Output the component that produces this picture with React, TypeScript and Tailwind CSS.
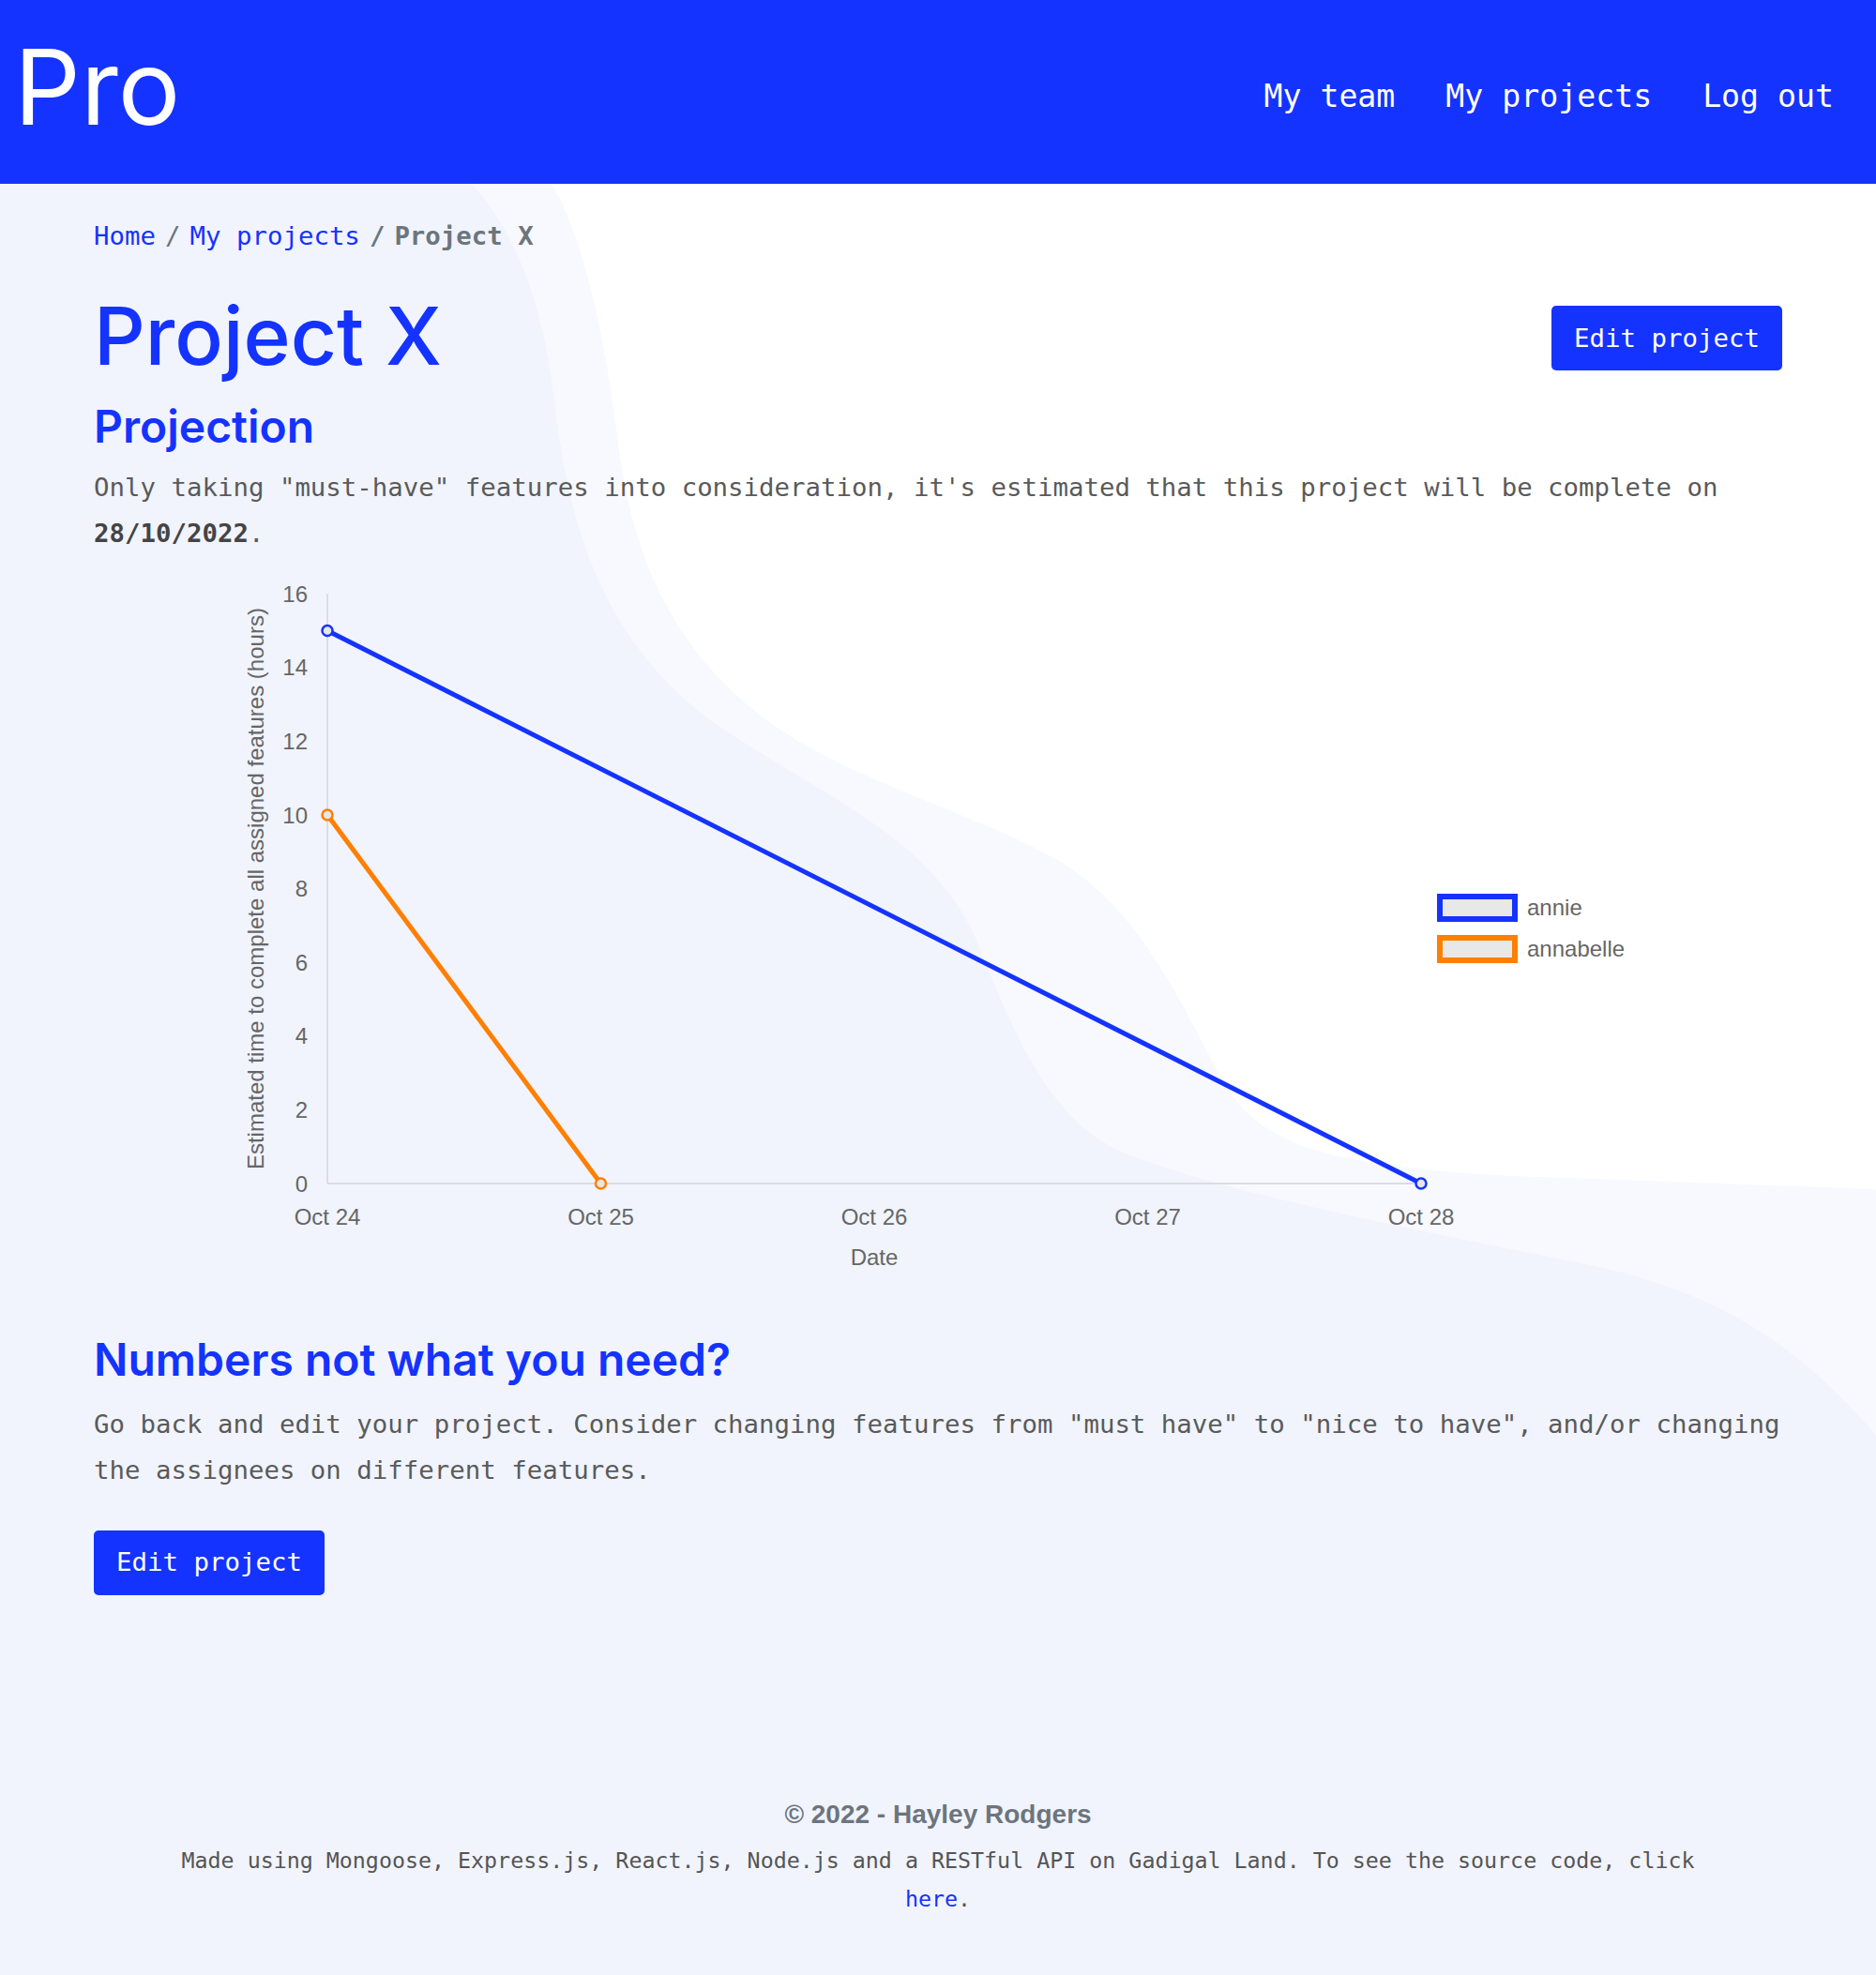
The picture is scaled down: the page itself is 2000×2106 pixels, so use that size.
import React from "react";

const BLUE = "#1433ff";
const ORANGE = "#ff7f00";

// chart geometry, in page pixels
const X0 = 349;
const Y0 = 1261;
const DX = 291.5;
const DY = 39.3;
const xOf = (i: number) => X0 + i * DX;
const yOf = (v: number) => Y0 - v * DY;

const DAYS = ["Oct 24", "Oct 25", "Oct 26", "Oct 27", "Oct 28"];
const SERIES = [
  { name: "annie", color: BLUE, points: [[0, 15], [4, 0]] },
  { name: "annabelle", color: ORANGE, points: [[0, 10], [1, 0]] },
];

function Backdrop() {
  return (
    <svg
      className="pointer-events-none absolute left-0 top-[196px]"
      width={2000}
      height={1910}
      viewBox="0 196 2000 1910"
    >
      <path
        d="M588,196 C615,240 642,330 660,480 C676,600 722,705 835,780 C930,842 1080,880 1150,932 C1228,990 1268,1090 1308,1160 C1348,1222 1420,1244 1612,1254 L2000,1268 V2106 H0 V196 Z"
        fill="#f8f9fe"
      />
      <path
        d="M503,196 C540,238 575,300 590,420 C606,560 640,680 760,770 C880,852 990,890 1040,1000 C1080,1100 1118,1196 1200,1230 C1300,1270 1500,1310 1700,1350 C1850,1382 1930,1450 2000,1530 V2106 H0 V196 Z"
        fill="#f1f4fd"
      />
    </svg>
  );
}

function Header() {
  return (
    <header className="relative z-10 flex h-[196px] items-start justify-between bg-[#1433ff] pl-[15px] pr-[45px]">
      <div className="pt-[37px] font-['Inter',sans-serif] text-[111px] font-normal leading-none text-white">
        Pro
      </div>
      <nav className="mt-[83px] flex gap-[54px] font-['DejaVu_Sans_Mono',monospace] text-[33.2px] leading-[40px] text-white">
        <a href="#">My team</a>
        <a href="#">My projects</a>
        <a href="#">Log out</a>
      </nav>
    </header>
  );
}

function EditButton() {
  return (
    <button
      type="button"
      className="h-[69px] rounded-[5px] bg-[#1433ff] px-[24px] font-['DejaVu_Sans_Mono',monospace] text-[27.4px] leading-none text-white"
    >
      Edit project
    </button>
  );
}

function Chart() {
  return (
    <svg width={1800} height={770} viewBox="100 600 1800 770" className="block font-['Liberation_Sans',Arial,sans-serif]">
      {/* axes */}
      <line x1={X0} y1={yOf(16)} x2={X0} y2={Y0} stroke="#dcdde3" strokeWidth={2} />
      <line x1={X0} y1={Y0} x2={xOf(4)} y2={Y0} stroke="#dcdde3" strokeWidth={2} />

      {/* y ticks */}
      {[0, 2, 4, 6, 8, 10, 12, 14, 16].map((v) => (
        <text key={v} x={328} y={yOf(v) + 8.5} textAnchor="end" fontSize={24} fill="#666">
          {v}
        </text>
      ))}
      <text
        transform={`translate(281 ${(yOf(16) + Y0) / 2}) rotate(-90)`}
        textAnchor="middle"
        fontSize={24}
        fill="#666"
      >
        Estimated time to complete all assigned features (hours)
      </text>

      {/* x ticks */}
      {DAYS.map((d, i) => (
        <text key={d} x={xOf(i)} y={1305} textAnchor="middle" fontSize={24} fill="#666">
          {d}
        </text>
      ))}
      <text x={(xOf(0) + xOf(4)) / 2} y={1348} textAnchor="middle" fontSize={24} fill="#666">
        Date
      </text>

      {/* lines */}
      {SERIES.map((s) => (
        <g key={s.name}>
          <polyline
            points={s.points.map(([i, v]) => `${xOf(i)},${yOf(v)}`).join(" ")}
            fill="none"
            stroke={s.color}
            strokeWidth={5}
            strokeLinecap="round"
          />
          {s.points.map(([i, v]) => (
            <circle key={i} cx={xOf(i)} cy={yOf(v)} r={5.5} fill="#e6e6e6" stroke={s.color} strokeWidth={2.5} />
          ))}
        </g>
      ))}

      {/* legend */}
      {SERIES.map((s, k) => (
        <g key={s.name}>
          <rect x={1535} y={955 + k * 44} width={80} height={24} fill="#e8e8e8" stroke={s.color} strokeWidth={6} />
          <text x={1628} y={975 + k * 44} fontSize={24} fill="#666">
            {s.name}
          </text>
        </g>
      ))}
    </svg>
  );
}

export default function App() {
  return (
    <div className="relative min-h-[2106px] w-full overflow-hidden bg-white">
      <Backdrop />
      <Header />

      <main className="relative z-10 px-[100px]">
        <nav className="pt-[38px] font-['DejaVu_Sans_Mono',monospace] text-[27.4px] leading-[36px]">
          <a href="#" className="text-[#1433ff]">Home</a>
          <span className="mx-[10px] text-[#6c757d]">/</span>
          <a href="#" className="text-[#1433ff]">My projects</a>
          <span className="mx-[10px] font-bold text-[#6c757d]">/</span>
          <span className="font-bold text-[#6c757d]">Project X</span>
        </nav>

        <div className="mt-[46px] flex items-start justify-between">
          <h1 className="font-['Inter',sans-serif] text-[85.5px] font-medium leading-none text-[#1433ff]">Project X</h1>
          <div className="mt-[10px]">
            <EditButton />
          </div>
        </div>

        <h2 className="mt-[29px] font-['Inter',sans-serif] text-[48px] font-semibold leading-none text-[#1433ff]">
          Projection
        </h2>
        <p className="mt-[16px] font-['DejaVu_Sans_Mono',monospace] text-[27.4px] leading-[49px] text-[#5a5a5a]">
          Only taking "must-have" features into consideration, it's estimated that this project will be complete on{" "}
          <strong className="font-bold text-[#444]">28/10/2022</strong>.
        </p>

        <div className="mt-[8px]">
          <Chart />
        </div>

        <h2 className="mt-[55px] font-['Inter',sans-serif] text-[48px] font-semibold leading-none text-[#1433ff]">
          Numbers not what you need?
        </h2>
        <p className="mt-[20px] font-['DejaVu_Sans_Mono',monospace] text-[27.4px] leading-[49px] text-[#5a5a5a]">
          Go back and edit your project. Consider changing features from "must have" to "nice to have", and/or changing
          the assignees on different features.
        </p>
        <div className="mt-[40px]">
          <EditButton />
        </div>
      </main>

      <footer className="relative z-10 mt-[217px] pb-[61px] text-center">
        <div className="font-['Liberation_Sans',Arial,sans-serif] text-[28px] font-bold leading-[34px] text-[#6c757d]">
          © 2022 - Hayley Rodgers
        </div>
        <p className="mx-auto mt-[11px] max-w-[1650px] font-['DejaVu_Sans_Mono',monospace] text-[23.3px] leading-[41px] text-[#555]">
          Made using Mongoose, Express.js, React.js, Node.js and a RESTful API on Gadigal Land. To see the source code, click{" "}
          <a href="#" className="text-[#1433ff]">here</a>.
        </p>
      </footer>
    </div>
  );
}
